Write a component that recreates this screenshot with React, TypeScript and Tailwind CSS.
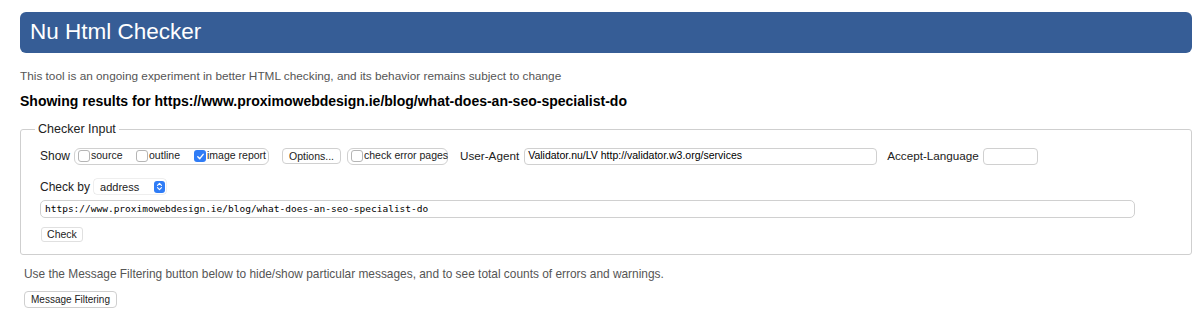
import React from "react";

const Box = ({ checked }: { checked?: boolean }) =>
  checked ? (
    <span className="inline-flex h-[12px] w-[12px] shrink-0 items-center justify-center rounded-[3px] bg-[#2f7cf6]">
      <svg width="9" height="9" viewBox="0 0 10 10">
        <path d="M2 5.2 L4.2 7.4 L8 2.6" fill="none" stroke="white" strokeWidth="1.6" strokeLinecap="round" strokeLinejoin="round" />
      </svg>
    </span>
  ) : (
    <span className="inline-block h-[12px] w-[12px] shrink-0 rounded-[3px] border border-[#b5b5b5] bg-white" />
  );

const App = () => {
  return (
    <div className="w-[1200px] h-[313px] bg-white pl-[20px] pr-[8px] pt-[12px] font-['Liberation_Sans',Arial,sans-serif] text-[#111]">
      <div className="flex h-[41px] items-center rounded-[6px] bg-[#365d96] pl-[10px]">
        <h1 className="text-[22.5px] leading-none text-white">Nu Html Checker</h1>
      </div>

      <p className="mt-[15px] text-[11.8px] leading-[16px] text-[#555]">
        This tool is an ongoing experiment in better HTML checking, and its behavior remains subject to change
      </p>
      <p className="mt-[9px] text-[14px] font-bold leading-[17px] text-black">
        Showing results for https://www.proximowebdesign.ie/blog/what-does-an-seo-specialist-do
      </p>

      <fieldset className="mt-[10px] h-[135px] rounded-[3px] border border-[#cfcfcf]">
        <legend className="ml-[14px] px-[3px] text-[12.5px] text-[#222]">Checker Input</legend>

        <div className="pl-[19px] pr-[20px]">
          <div className="mt-[9px] flex h-[17px] items-center whitespace-nowrap text-[11.7px] text-[#222]">
            <span className="shrink-0 text-[12px]">Show</span>
            <div className="ml-[4px] flex h-[17px] w-[195px] shrink-0 items-center rounded-[6px] border border-[#d0d0d0] pl-[3px] text-[10.5px]">
              <Box />
              <span className="ml-[1px] w-[45px]">source</span>
              <Box />
              <span className="ml-[1px] w-[45px]">outline</span>
              <Box checked />
              <span className="ml-[1px]">image report</span>
            </div>
            <button className="ml-[13px] h-[16px] w-[59px] shrink-0 rounded-[4px] border border-[#d0d0d0] bg-white text-[10.5px] leading-none text-[#222]">
              Options...
            </button>
            <div className="ml-[6px] flex h-[17px] w-[101px] shrink-0 items-center rounded-[6px] border border-[#d0d0d0] pl-[3px] text-[10.5px]">
              <Box />
              <span className="ml-[1px]">check error pages</span>
            </div>
            <span className="ml-[12px] shrink-0">User-Agent</span>
            <div className="ml-[5px] flex h-[17px] w-[353px] shrink-0 items-center rounded-[4px] border border-[#d0d0d0] pl-[3px] text-[10.5px] text-black">
              Validator.nu/LV http://validator.w3.org/services
            </div>
            <span className="ml-[10px] shrink-0">Accept-Language</span>
            <div className="ml-[4px] h-[17px] w-[55px] shrink-0 rounded-[4px] border border-[#d0d0d0]" />
          </div>

          <div className="mt-[14px] flex h-[16px] items-center whitespace-nowrap text-[12px] text-[#222]">
            <span>Check by</span>
            <div className="ml-[4px] flex h-[15px] w-[72px] items-center justify-between rounded-[3px] bg-white pl-[6px] pr-[1px] text-[11px] shadow-[0_0_0_0.5px_#ddd]">
              <span>address</span>
              <span className="flex h-[12px] w-[11px] items-center justify-center rounded-[3px] bg-[#2f7cf6]">
                <svg width="7" height="9" viewBox="0 0 7 9">
                  <path d="M1.5 3.3 L3.5 1.3 L5.5 3.3 M1.5 5.7 L3.5 7.7 L5.5 5.7" fill="none" stroke="white" strokeWidth="1.1" strokeLinecap="round" strokeLinejoin="round" />
                </svg>
              </span>
            </div>
          </div>

          <div className="mt-[5px] flex h-[18px] w-[1095px] items-center rounded-[5px] border border-[#d0d0d0] pl-[4px] font-['DejaVu_Sans_Mono',monospace] text-[9.5px] text-black">
            https://www.proximowebdesign.ie/blog/what-does-an-seo-specialist-do
          </div>

          <button className="ml-[1px] mt-[9px] flex h-[15px] w-[42px] items-center justify-center rounded-[3px] border border-[#e0e0e0] bg-white text-[10.5px] leading-none text-[#222]">
            Check
          </button>
        </div>
      </fieldset>

      <p className="ml-[4px] mt-[11px] text-[11.9px] leading-[16px] text-[#555]">
        Use the Message Filtering button below to hide/show particular messages, and to see total counts of errors and warnings.
      </p>
      <button className="ml-[4px] mt-[9px] flex h-[17px] w-[93px] items-center justify-center rounded-[4px] border border-[#cfcfcf] bg-white text-[10px] leading-none text-[#222]">
        Message Filtering
      </button>
    </div>
  );
};

export default App;
